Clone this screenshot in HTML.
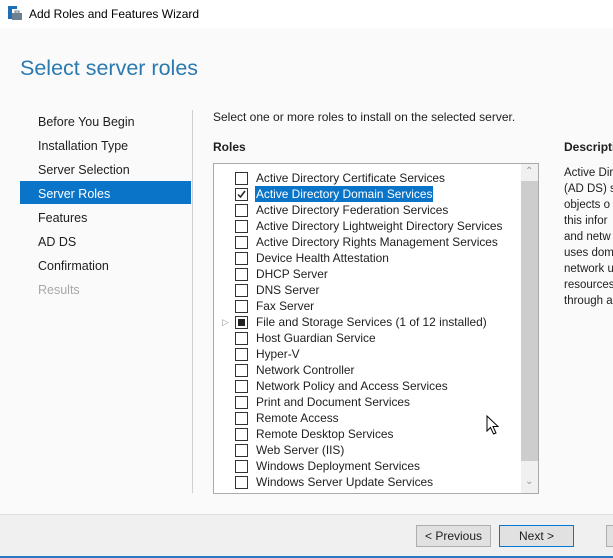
<!DOCTYPE html>
<html><head><style>
body{margin:0;width:613px;height:558px;overflow:hidden;background:#fafafa;font-family:"Liberation Sans",sans-serif;font-size:12px;color:#1e1e1e;position:relative}
.a{position:absolute;white-space:nowrap}
.tb{left:0;top:0;width:613px;height:28px;background:#fff}
.nav{left:38px;font-size:12.5px}
.row{position:absolute;left:0;height:16px;line-height:16px}
.cb{position:absolute;left:21px;top:2px;width:11px;height:11px;border:1px solid #333;background:#fff}
.tx{position:absolute;left:41px;top:0;padding:0 1px;font-size:11.9px}
.d{left:564px;font-size:11.5px}
</style></head><body>
<div class="a tb"></div>
<svg class="a" style="left:7px;top:5px" width="16" height="16"><rect x="1" y="1" width="4" height="13" fill="#1e6fb5"/><rect x="1" y="1" width="9" height="3" fill="#1e6fb5"/><rect x="5" y="8" width="10" height="7" fill="#6e7f8f"/><rect x="8" y="6" width="4" height="2" fill="none" stroke="#6e7f8f"/></svg>
<div class="a" style="left:29px;top:7px;font-size:12px;color:#000">Add Roles and Features Wizard</div>
<div class="a" style="left:20px;top:56px;font-size:21.5px;color:#2a7ab0;font-weight:300">Select server roles</div>
<div class="a nav" style="top:115px">Before You Begin</div>
<div class="a nav" style="top:139px">Installation Type</div>
<div class="a nav" style="top:163px">Server Selection</div>
<div class="a" style="left:20px;top:181px;width:171px;height:23px;background:#0a74c9"></div>
<div class="a nav" style="top:187px;color:#fff">Server Roles</div>
<div class="a nav" style="top:211px">Features</div>
<div class="a nav" style="top:235px">AD DS</div>
<div class="a nav" style="top:259px">Confirmation</div>
<div class="a nav" style="top:283px;color:#a8a8a8">Results</div>
<div class="a" style="left:192px;top:110px;width:1px;height:383px;background:#d0d0d0"></div>
<div class="a" style="left:213px;top:110px">Select one or more roles to install on the selected server.</div>
<div class="a" style="left:213px;top:140px;font-weight:bold">Roles</div>
<div class="a" style="left:564px;top:140px;font-weight:bold">Descriptio</div>
<div class="a" style="left:213px;top:163px;width:324px;height:329px;border:1px solid #aaa;background:#fff;overflow:hidden">
 <div class="a" style="left:307px;top:0;width:17px;height:329px;background:#f0f0f0"></div>
 <div class="a" style="left:307px;top:17px;width:17px;height:280px;background:#cdcdcd"></div>
 <div class="a" style="left:311px;top:2px;color:#999;font-size:10px">&#8963;</div>
 <div class="a" style="left:311px;top:312px;color:#999;font-size:10px">&#8964;</div>
 <div style="position:absolute;left:0;top:6px;width:307px">
  <div class="row" style="top:0"><div class="cb"></div><div class="tx">Active Directory Certificate Services</div></div>
  <div class="row" style="top:16px"><div class="cb"><svg width="11" height="11" style="position:absolute;left:0;top:0"><path d="M2 5.5L4.5 8L9 2" stroke="#222" stroke-width="1.5" fill="none"/></svg></div><div class="tx" style="background:#0a74c9;color:#fff">Active Directory Domain Services</div></div>
  <div class="row" style="top:32px"><div class="cb"></div><div class="tx">Active Directory Federation Services</div></div>
  <div class="row" style="top:48px"><div class="cb"></div><div class="tx">Active Directory Lightweight Directory Services</div></div>
  <div class="row" style="top:64px"><div class="cb"></div><div class="tx">Active Directory Rights Management Services</div></div>
  <div class="row" style="top:80px"><div class="cb"></div><div class="tx">Device Health Attestation</div></div>
  <div class="row" style="top:96px"><div class="cb"></div><div class="tx">DHCP Server</div></div>
  <div class="row" style="top:112px"><div class="cb"></div><div class="tx">DNS Server</div></div>
  <div class="row" style="top:128px"><div class="cb"></div><div class="tx">Fax Server</div></div>
  <div class="row" style="top:144px"><div class="a" style="left:8px;top:0;color:#999;font-size:9px">&#9655;</div><div class="cb"><div style="position:absolute;left:2px;top:2px;width:7px;height:7px;background:#222"></div></div><div class="tx">File and Storage Services (1 of 12 installed)</div></div>
  <div class="row" style="top:160px"><div class="cb"></div><div class="tx">Host Guardian Service</div></div>
  <div class="row" style="top:176px"><div class="cb"></div><div class="tx">Hyper-V</div></div>
  <div class="row" style="top:192px"><div class="cb"></div><div class="tx">Network Controller</div></div>
  <div class="row" style="top:208px"><div class="cb"></div><div class="tx">Network Policy and Access Services</div></div>
  <div class="row" style="top:224px"><div class="cb"></div><div class="tx">Print and Document Services</div></div>
  <div class="row" style="top:240px"><div class="cb"></div><div class="tx">Remote Access</div></div>
  <div class="row" style="top:256px"><div class="cb"></div><div class="tx">Remote Desktop Services</div></div>
  <div class="row" style="top:272px"><div class="cb"></div><div class="tx">Web Server (IIS)</div></div>
  <div class="row" style="top:288px"><div class="cb"></div><div class="tx">Windows Deployment Services</div></div>
  <div class="row" style="top:304px"><div class="cb"></div><div class="tx">Windows Server Update Services</div></div>
 </div>
</div>
<svg class="a" style="left:486px;top:415px" width="14" height="22"><path d="M1 1L1 16L4.5 12.5L7.5 19L10 18L7 11.5L12 11.5Z" fill="#fff" stroke="#000"/></svg>
<div class="a d" style="top:165px;line-height:16px">Active Dir<br>(AD DS) s<br>objects o<br>this infor<br>and netw<br>uses dom<br>network u<br>resources<br>through a</div>
<div class="a" style="left:0;top:514px;width:613px;height:42px;background:#f0f0f0;border-top:1px solid #dcdcdc"></div>
<div class="a" style="left:0;top:556px;width:613px;height:2px;background:#2b79c2"></div>
<div class="a" style="left:416px;top:525px;width:73px;height:20px;border:1px solid #adadad;background:#e1e1e1;text-align:center;line-height:20px">&lt; Previous</div>
<div class="a" style="left:499px;top:525px;width:73px;height:20px;border:1px solid #0078d7;background:#e1e1e1;text-align:center;line-height:20px">Next &gt;</div>
<div class="a" style="left:606px;top:525px;width:10px;height:20px;border:1px solid #adadad;background:#e1e1e1"></div>
</body></html>
